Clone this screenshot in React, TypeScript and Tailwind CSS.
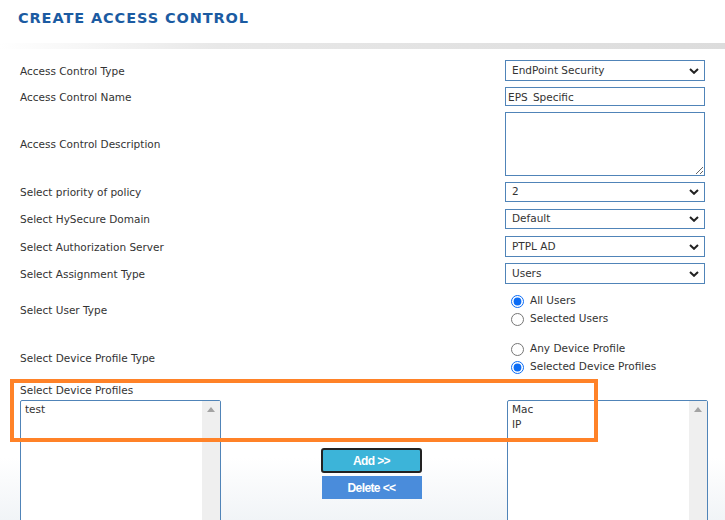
import { useState } from "react";

const labelFont = { fontFamily: '"DejaVu Sans", Verdana, sans-serif' };
const btnFont = { fontFamily: '"Liberation Sans", Arial, sans-serif' };

const Chevron = () => (
  <svg width="10" height="6" viewBox="0 0 10 6" className="pointer-events-none absolute right-[6px] top-1/2 -translate-y-1/2">
    <path d="M1 1 L5 4.8 L9 1" fill="none" stroke="#222" strokeWidth="2" />
  </svg>
);

const SelectBox = ({ value, options, h = "h-[21px]" }: { value: string; options: string[]; h?: string }) => (
  <div className={`relative w-[200px] ${h}`}>
    <select
      defaultValue={value}
      className="block h-full w-full appearance-none border border-[#5084b8] bg-white pl-[6px] text-[10.5px] text-[#333] outline-none"
      style={labelFont}
    >
      {options.map((o) => (
        <option key={o}>{o}</option>
      ))}
    </select>
    <Chevron />
  </div>
);

const Row = ({ label, children, className = "" }: { label: string; children: React.ReactNode; className?: string }) => (
  <div className={`flex items-center justify-between ${className}`}>
    <span className="text-[10.5px] leading-[14px] text-[#333]">{label}</span>
    <div className="flex w-[200px] flex-col">{children}</div>
  </div>
);

const Radio = ({ name, label, checked, onChange }: { name: string; label: string; checked: boolean; onChange: () => void }) => (
  <label className="flex h-[18px] items-center gap-[6px] pl-[6px] text-[10.5px] text-[#333]">
    <input type="radio" name={name} checked={checked} onChange={onChange} className="m-0 h-[13px] w-[13px] accent-[#0b6cf5]" />
    {label}
  </label>
);

const ListBox = ({ items }: { items: string[] }) => (
  <div className="flex h-[140px] w-[201px] shrink-0 rounded-t-[2px] border border-[#5084b8] bg-white">
    <div className="flex-1 pl-[4px] pt-[1px] text-[10.5px] leading-[15px] text-[#333]">
      {items.map((i) => (
        <div key={i}>{i}</div>
      ))}
    </div>
    <div className="flex w-[18px] justify-center bg-[#efefef] pt-[6px]">
      <svg width="8" height="5" viewBox="0 0 8 5">
        <path d="M0 5 L4 0 L8 5 Z" fill="#a3a3a3" />
      </svg>
    </div>
  </div>
);

export default function App() {
  const [userType, setUserType] = useState("all");
  const [profileType, setProfileType] = useState("selected");

  return (
    <div
      className="relative h-[520px] w-[725px] overflow-hidden bg-[linear-gradient(to_bottom,#ffffff_88%,#f1f4f7)]"
      style={labelFont}
    >
      <h1 className="pl-[18px] pt-[9px] text-[14.5px] font-bold leading-[18px] tracking-[0.9px] text-[#1b5ba2]">
        CREATE ACCESS CONTROL
      </h1>
      <div className="mt-[16px] h-[6px] w-full bg-[linear-gradient(to_right,rgba(255,255,255,0),#e8e8e8_30%,#dcdcdc)]" />

      <div className="flex flex-col px-5 pt-[11px]">
        <Row label="Access Control Type">
          <SelectBox value="EndPoint Security" options={["EndPoint Security", "Network Security"]} />
        </Row>
        <Row label="Access Control Name" className="mt-[6px]">
          <input
            defaultValue="EPS_Specific"
            className="block h-[19px] w-[200px] border border-[#5084b8] px-[2px] py-0 text-[10.5px] leading-normal text-[#333] outline-none"
            style={labelFont}
          />
        </Row>
        <Row label="Access Control Description" className="mt-[6px]">
          <textarea className="block h-[64px] w-[200px] border border-[#5084b8] outline-none" />
        </Row>
        <Row label="Select priority of policy" className="mt-[6px]">
          <SelectBox value="2" options={["1", "2", "3"]} h="h-[20px]" />
        </Row>
        <Row label="Select HySecure Domain" className="mt-[7px]">
          <SelectBox value="Default" options={["Default"]} h="h-[20px]" />
        </Row>
        <Row label="Select Authorization Server" className="mt-[7px]">
          <SelectBox value="PTPL AD" options={["PTPL AD"]} />
        </Row>
        <Row label="Select Assignment Type" className="mt-[6px]">
          <SelectBox value="Users" options={["Users", "Groups"]} />
        </Row>
        <Row label="Select User Type" className="mt-[8px]">
          <Radio name="ut" label="All Users" checked={userType === "all"} onChange={() => setUserType("all")} />
          <Radio name="ut" label="Selected Users" checked={userType === "sel"} onChange={() => setUserType("sel")} />
        </Row>
        <Row label="Select Device Profile Type" className="mt-[12px]">
          <Radio name="dp" label="Any Device Profile" checked={profileType === "any"} onChange={() => setProfileType("any")} />
          <Radio
            name="dp"
            label="Selected Device Profiles"
            checked={profileType === "selected"}
            onChange={() => setProfileType("selected")}
          />
        </Row>
        <div className="mt-[7px] text-[10.5px] leading-[14px] text-[#333]">Select Device Profiles</div>
        <div className="mt-[3px] flex items-start">
          <ListBox items={["test"]} />
          <div className="ml-[100px] mt-[48px] flex w-[101px] shrink-0 flex-col gap-[3px]">
            <button
              className="h-[25px] rounded-[3px] border-2 border-[#222] bg-[#3cb4d9] text-[12px] font-bold tracking-[-0.6px] text-white"
              style={btnFont}
            >
              Add &gt;&gt;
            </button>
            <button
              className="mx-auto h-[23px] w-[100px] bg-[#4a8cdb] text-[12px] font-bold tracking-[-0.6px] text-white"
              style={btnFont}
            >
              Delete &lt;&lt;
            </button>
          </div>
          <div className="ml-[85px] shrink-0">
            <ListBox items={["Mac", "IP"]} />
          </div>
        </div>
      </div>

      <div className="pointer-events-none absolute left-[10px] top-[379px] h-[63px] w-[588px] border-[4px] border-[#ff8228]" />
    </div>
  );
}
